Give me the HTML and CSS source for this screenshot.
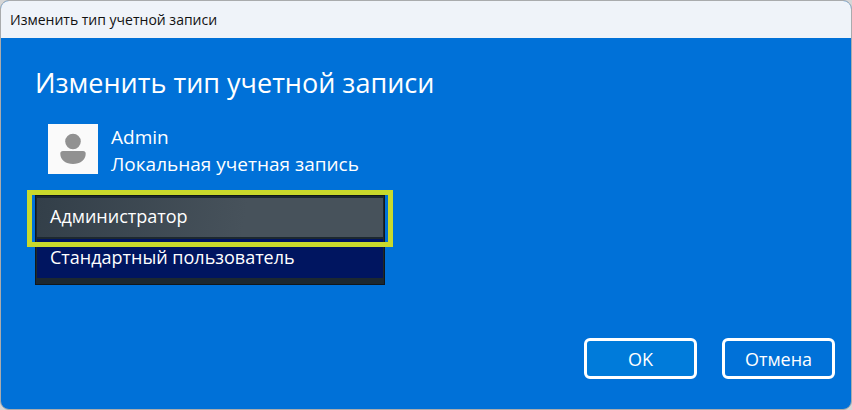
FILE: index.html
```html
<!DOCTYPE html>
<html lang="ru">
  <head>
    <meta charset="UTF-8" />
    <meta name="viewport" content="width=device-width, initial-scale=1.0" />
    <title>Изменить тип учетной записи</title>
    <link rel="stylesheet" href="styles.css">
  </head>
  <body>
    <div class="window">
      <div class="title-bar">Изменить тип учетной записи</div>
      <form class="content">
        <h1>Изменить тип учетной записи</h1>
        <div class="account">
          <div class="avatar">
            <svg width="50" height="50" viewBox="0 0 50 50" aria-hidden="true">
              <circle cx="25" cy="17.5" r="7.8" />
              <path d="M15 27h20a2.700 2.700 0 0 1 2.700 2.700c0 6.300-5.700 10.300-12.700 10.300s-12.700-4-12.700-10.300a2.700 2.700 0 0 1 2.700-2.700z" />
            </svg>
          </div>
          <div class="account-info">
            <div>Admin</div>
            <div>Локальная учетная запись</div>
          </div>
        </div>
        <div class="type-list">
          <select id="account-type" size="2" aria-label="Тип учетной записи">
            <option class="admin">Администратор</option>
            <option class="standard">Стандартный пользователь</option>
          </select>
          <div class="highlight"></div>
        </div>
        <div class="buttons">
          <button type="button" class="ok">OK</button>
          <button type="button">Отмена</button>
        </div>
      </form>
    </div>
  </body>
</html>
```
FILE: styles.css
```css
* {
  box-sizing: border-box;
}
body {
  margin: 0;
  background-color: #d6d6d6;
  font-family: "Segoe UI", "Open Sans", sans-serif;
}
.window {
  display: flex;
  flex-direction: column;
  min-height: 100vh;
  border: 1px solid #a9abad;
  border-radius: 9px;
  overflow: hidden;
  background-color: #0071d8;
}
.title-bar {
  padding: 0 9px;
  background-color: #eff3f9;
  color: #111;
  font-size: 14px;
  line-height: 37px;
}
.content {
  flex: 1;
  display: flex;
  flex-direction: column;
  padding: 24px 16px 30px 34px;
  color: #fff;
}
h1 {
  margin: 0;
  font-size: 27px;
  font-weight: 400;
  line-height: 42px;
}
.account {
  display: flex;
  gap: 13px;
  margin: 20px 0 0 13px;
}
.avatar {
  width: 50px;
  height: 50px;
  background-color: #fafafa;
}
.avatar svg {
  display: block;
  fill: #919191;
}
.account-info {
  font-size: 19px;
  line-height: 27px;
}
.type-list {
  position: relative;
  width: 350px;
  max-width: 100%;
  margin-top: 17px;
}
select {
  display: block;
  width: 100%;
  height: 90px;
  margin: 0;
  padding: 2px 1px 6px;
  border: 1px solid #11171b;
  border-radius: 0;
  outline: none;
  overflow: hidden;
  background-color: #1c2830;
  color: #fff;
  font-family: inherit;
  font-size: 18px;
}
option {
  height: 39px;
  padding: 6px 13px;
}
.admin {
  margin-bottom: 2px;
  background-image: linear-gradient(100deg, #333f49, #47525b 60%);
}
.standard {
  background-color: #001560;
}
.highlight {
  position: absolute;
  top: -5px;
  left: -8px;
  right: -8px;
  height: 57px;
  border: 5px solid #c9d92c;
  pointer-events: none;
}
.buttons {
  display: flex;
  justify-content: flex-end;
  gap: 25px;
  margin-top: auto;
}
button {
  width: 113px;
  height: 41px;
  padding: 0;
  border: 3px solid #fff;
  border-radius: 6px;
  background-color: #0071d8;
  color: #fff;
  font-family: inherit;
  font-size: 18px;
}
.ok {
  background-color: #007bda;
}
```
